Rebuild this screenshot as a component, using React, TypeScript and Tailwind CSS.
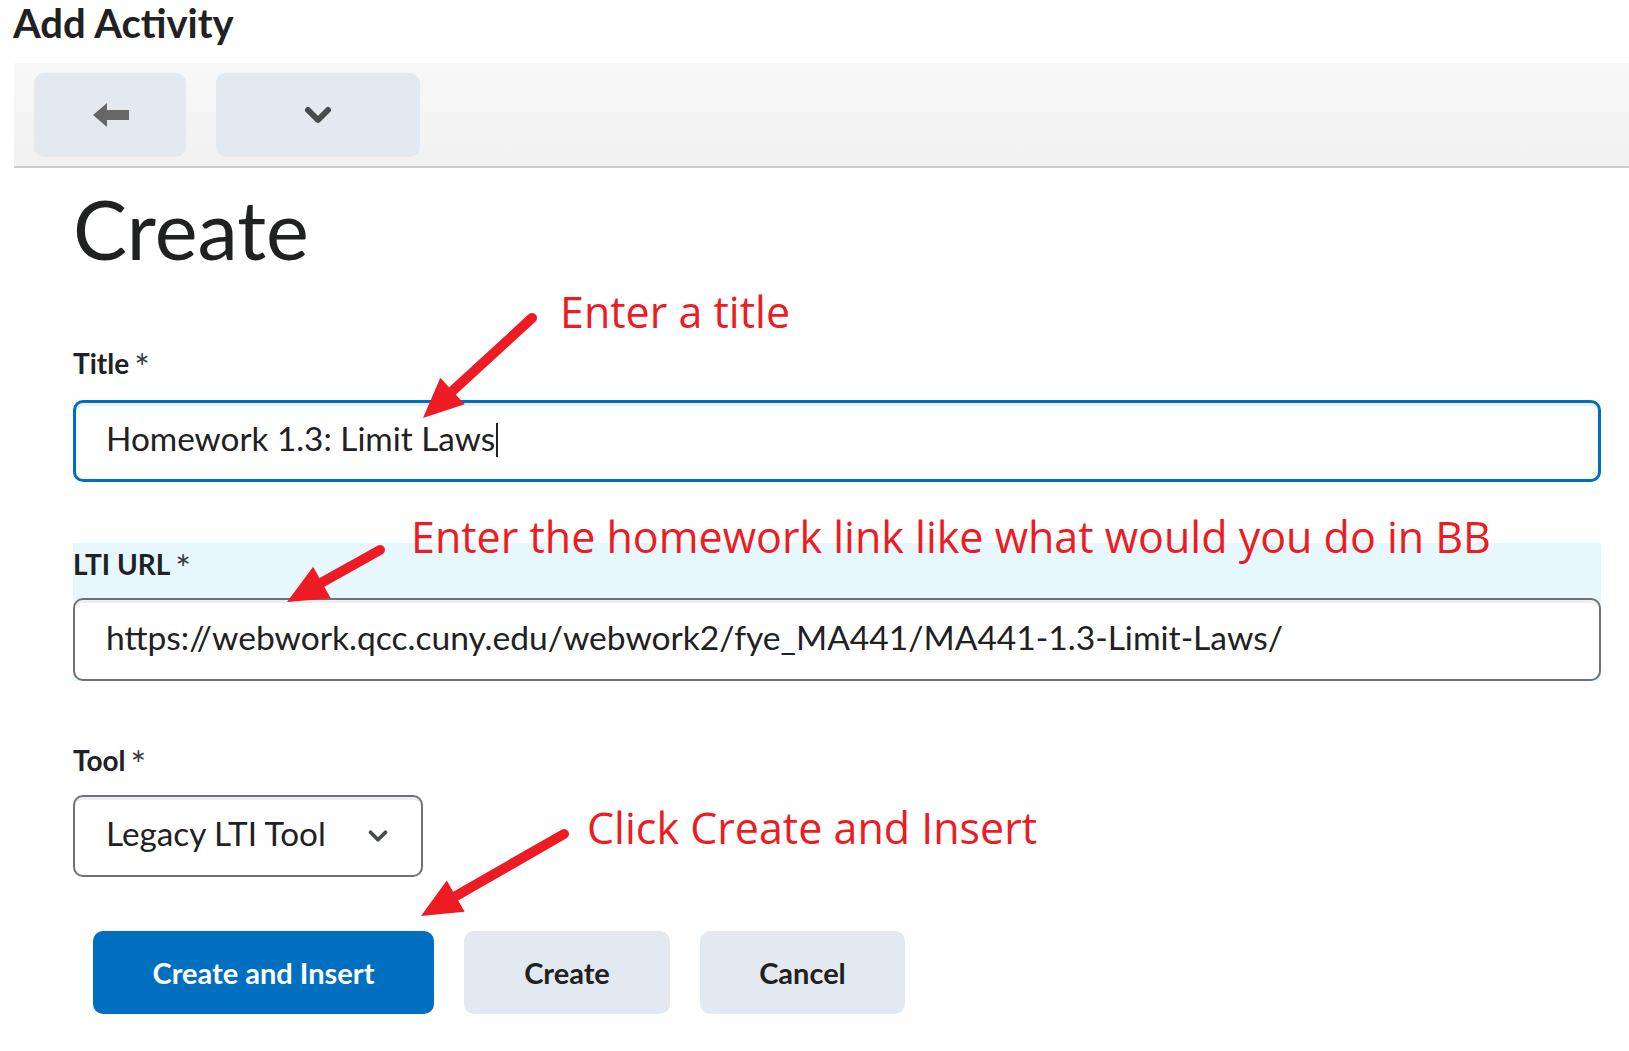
import { ChevronDown } from "lucide-react";

type Pt = [number, number];

// red annotation arrow, tail -> tip
function Arrow({ from, to }: { from: Pt; to: Pt }) {
	const [x1, y1] = from;
	const [x2, y2] = to;
	const dx = x2 - x1;
	const dy = y2 - y1;
	const len = Math.hypot(dx, dy);
	const ux = dx / len;
	const uy = dy / len;
	const headLen = 40;
	const half = 18;
	const bx = x2 - ux * headLen;
	const by = y2 - uy * headLen;
	const head = [
		[x2, y2],
		[bx - uy * half, by + ux * half],
		[bx + uy * half, by - ux * half],
	]
		.map((p) => p.join(","))
		.join(" ");
	return (
		<g>
			<line
				x1={x1}
				y1={y1}
				x2={bx + ux * 4}
				y2={by + uy * 4}
				stroke="#ed1c24"
				strokeWidth={10}
				strokeLinecap="round"
			/>
			<polygon points={head} fill="#ed1c24" />
		</g>
	);
}

function Label({ text }: { text: string }) {
	return (
		<div className="h-[32px] text-[28px] leading-[32px] text-[#202122]">
			<span className="font-bold">{text}</span>
			<span className="ml-[5px] text-[37px] leading-[0px] font-normal text-[#3a3d40] relative top-[7px]">*</span>
		</div>
	);
}

export default function App() {
	return (
		<div
			className="relative w-[1629px] h-[1051px] overflow-hidden bg-white text-[#202122]"
			style={{ fontFamily: "Lato, 'Noto Sans', sans-serif" }}
		>
			<h1 className="pl-[13px] text-[40px] leading-[46px] font-bold mb-[17px]">Add Activity</h1>

			<div className="ml-[14px] h-[105px] border-b-2 border-[#cdcdcd] bg-gradient-to-b from-[#f8f8f8] to-[#f1f1f1] flex gap-[30px] pl-[20px] pt-[10px]">
				<button className="w-[152px] h-[84px] rounded-[10px] bg-[#e3e9f1] flex items-center justify-center">
					<svg width="38" height="26" viewBox="0 0 38 26" className="blur-[0.6px] ml-[2px]">
						<polygon points="1,13 15,1 15,8 37,8 37,18 15,18 15,25" fill="#676767" />
					</svg>
				</button>
				<button className="w-[204px] h-[84px] rounded-[10px] bg-[#e3e9f1] flex items-center justify-center">
					<ChevronDown size={40} strokeWidth={3.6} color="#494c4e" />
				</button>
			</div>

			<div className="pl-[73px] w-[1601px]">
				<h2 className="text-[81px] leading-[80px] font-normal mt-[21px]">Create</h2>

				<div className="mt-[78px]">
					<Label text="Title" />
				</div>
				<div className="mt-[21px] h-[82px] rounded-[10px] border-[3px] border-[#006fbf] shadow-[inset_0_3px_0_0_#eceef1] flex items-center pl-[30px] pb-[4px] text-[33.3px]">
					<span>Homework 1.3: Limit Laws</span>
					<span className="w-[2px] h-[34px] bg-[#202122] ml-[1px] mt-[2px]" />
				</div>

				<div className="mt-[61px] bg-[#e6f7fe]">
					<div className="pt-[5px] h-[55px]">
						<Label text="LTI URL" />
					</div>
					<div className="h-[83px] rounded-[10px] border-2 border-[#6e7276] bg-white shadow-[inset_0_3px_0_0_#eceef1] flex items-center pl-[31px] pb-[4px] text-[33.6px]">
						https://webwork.qcc.cuny.edu/webwork2/fye_MA441/MA441-1.3-Limit-Laws/
					</div>
				</div>

				<div className="mt-[63px]">
					<Label text="Tool" />
				</div>
				<div className="mt-[19px] w-[350px] h-[82px] rounded-[10px] border-2 border-[#6e7276] shadow-[inset_0_3px_0_0_#eceef1] flex items-center justify-between pl-[31px] pr-[28px] pb-[4px] text-[33.3px]">
					<span>Legacy LTI Tool</span>
					<ChevronDown size={30} strokeWidth={3} color="#494c4e" className="mt-[4px]" />
				</div>

				<div className="mt-[54px] ml-[20px] flex gap-[30px]">
					<button className="w-[341px] h-[83px] rounded-[10px] bg-[#006fbf] text-white text-[29px] font-bold">
						Create and Insert
					</button>
					<button className="w-[206px] h-[83px] rounded-[10px] bg-[#e3e9f1] text-[29px] font-bold">
						Create
					</button>
					<button className="w-[205px] h-[83px] rounded-[10px] bg-[#e3e9f1] text-[29px] font-bold">
						Cancel
					</button>
				</div>
			</div>

			{/* annotation layer */}
			<div
				className="absolute inset-0 pointer-events-none text-[#ed1c24] text-[43px] leading-none"
				style={{ fontFamily: "'Open Sans', 'Noto Sans', sans-serif" }}
			>
				<div className="absolute left-[560px] top-[290px]">Enter a title</div>
				<div className="absolute left-[411px] top-[515px]">Enter the homework link like what would you do in BB</div>
				<div className="absolute left-[587px] top-[806px]">Click Create and Insert</div>
				<svg className="absolute inset-0" width="1629" height="1051">
					<Arrow from={[532, 318]} to={[423, 418]} />
					<Arrow from={[380, 550]} to={[287, 602]} />
					<Arrow from={[564, 834]} to={[421, 916]} />
				</svg>
			</div>
		</div>
	);
}
